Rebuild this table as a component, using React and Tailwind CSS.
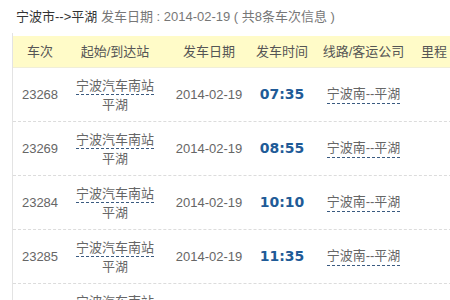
import React from "react";

const rows = [
  { no: "23268", time: "07:35" },
  { no: "23269", time: "08:55" },
  { no: "23284", time: "10:10" },
  { no: "23285", time: "11:35" },
  { no: "23286", time: "13:05" },
];

const font = { fontFamily: '"Liberation Sans", "Noto Sans CJK SC", sans-serif' };

export default function App() {
  return (
    <div
      className="w-[450px] h-[300px] overflow-hidden bg-white text-[13px] text-[#666]"
      style={font}
    >
      <div className="h-[33px] pl-4 pt-[8px] leading-[18px] whitespace-nowrap">
        <span className="text-[#333]">宁波市--&gt;平湖</span>
        <span className="text-[#777]"> 发车日期 : 2014-02-19 ( 共8条车次信息 )</span>
      </div>
      <div className="ml-3 border-l border-[#e3e3e3] pt-[3px] w-[460px]">
        <div className="flex h-[32px] items-center bg-[#fffbc8] border-b border-[#f0eed8] text-[#555] whitespace-nowrap">
          <div className="w-[54px] shrink-0 text-center">车次</div>
          <div className="w-[96px] shrink-0 text-center">起始/到达站</div>
          <div className="w-[92px] shrink-0 text-center">发车日期</div>
          <div className="w-[54px] shrink-0 text-center">发车时间</div>
          <div className="w-[109px] shrink-0 text-center">线路/客运公司</div>
          <div className="w-[32px] shrink-0 text-center">里程</div>
        </div>
        {rows.map((r) => (
          <div
            key={r.no}
            className="flex h-[54px] items-center border-b border-dashed border-[#dcdcdc] whitespace-nowrap"
          >
            <div className="w-[54px] shrink-0 text-center">{r.no}</div>
            <div className="w-[96px] shrink-0 flex flex-col items-center leading-[17px]">
              <span className="border-b border-dashed border-[#3a5a80]">宁波汽车南站</span>
              <span className="pt-[1px]">平湖</span>
            </div>
            <div className="w-[92px] shrink-0 text-center">2014-02-19</div>
            <div
              className="w-[54px] shrink-0 text-center font-bold text-[14px] text-[#1f5b97]"
              style={{ fontFamily: '"DejaVu Sans", Verdana, sans-serif' }}
            >
              {r.time}
            </div>
            <div className="w-[109px] shrink-0 flex justify-center">
              <span className="border-b border-dashed border-[#3a5a80] leading-[18px]">宁波南--平湖</span>
            </div>
            <div className="w-[32px] shrink-0"></div>
          </div>
        ))}
      </div>
    </div>
  );
}
